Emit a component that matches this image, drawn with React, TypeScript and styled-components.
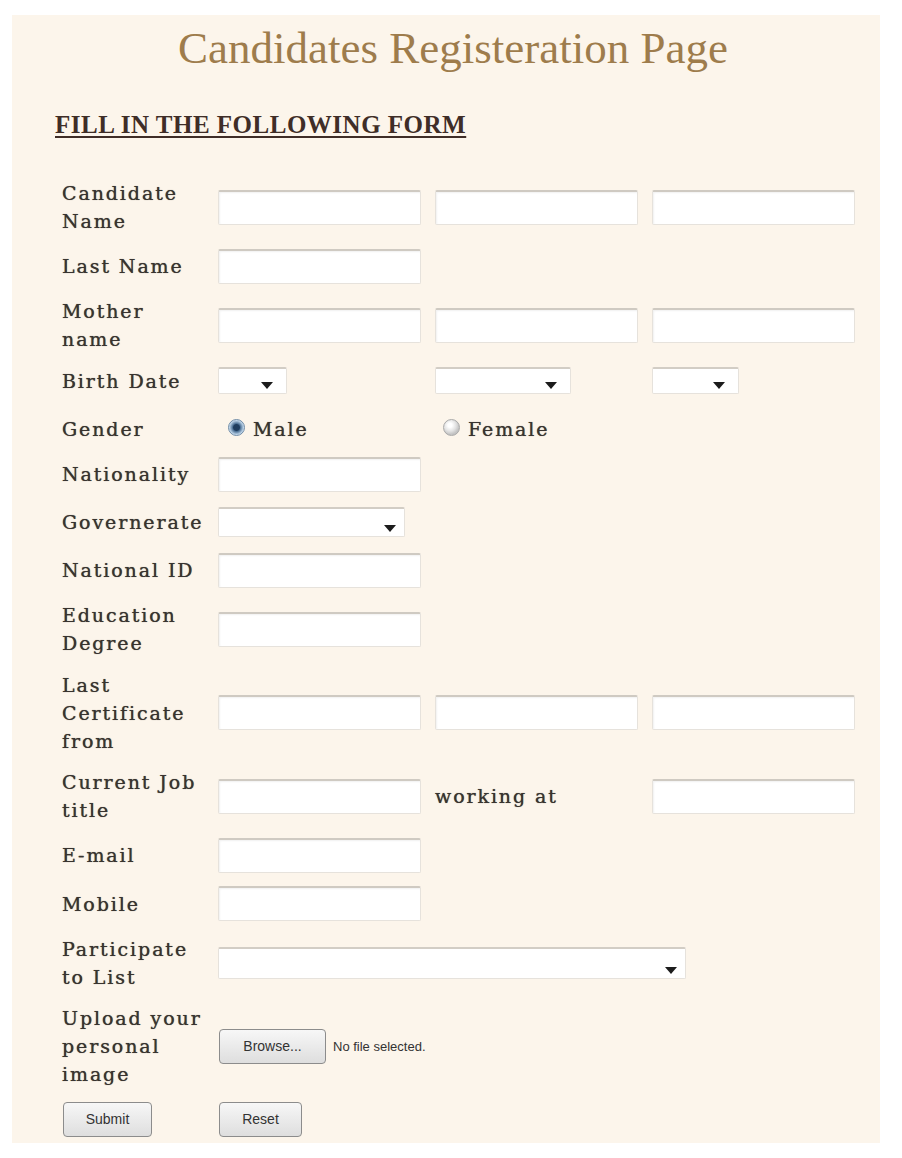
import styled, { createGlobalStyle } from "styled-components";

const GlobalStyle = createGlobalStyle`
  body {
    margin: 0;
    background: #ffffff;
  }
`;

const App = () => {
  return (
    <>
      <GlobalStyle />
      <Panel>
        <Title>Candidates Registeration Page</Title>
        <Heading>FILL IN THE FOLLOWING FORM</Heading>
        <Form>
          <Row>
            <Label lines={["Candidate", "Name"]} />
            <Fields>
              <TextInput />
              <TextInput />
              <TextInput />
            </Fields>
          </Row>
          <Row>
            <Label lines={["Last Name"]} />
            <Fields>
              <TextInput />
            </Fields>
          </Row>
          <Row>
            <Label lines={["Mother", "name"]} />
            <Fields>
              <TextInput />
              <TextInput />
              <TextInput />
            </Fields>
          </Row>
          <Row>
            <Label lines={["Birth Date"]} />
            <Fields>
              <Dropdown width={69} height={27} arrowRight={14} />
              <Dropdown width={136} height={27} arrowRight={14} />
              <Dropdown width={87} height={27} arrowRight={14} />
            </Fields>
          </Row>
          <Row $minHeight={35} $align="end">
            <Label lines={["Gender"]} />
            <Fields>
              <RadioOption $indent={10}>
                <RadioDot $checked />
                Male
              </RadioOption>
              <RadioOption $indent={8}>
                <RadioDot />
                Female
              </RadioOption>
            </Fields>
          </Row>
          <Row>
            <Label lines={["Nationality"]} />
            <Fields>
              <TextInput />
            </Fields>
          </Row>
          <Row $minHeight={34}>
            <Label lines={["Governerate"]} />
            <Fields>
              <Dropdown width={187} height={30} arrowRight={9} />
            </Fields>
          </Row>
          <Row>
            <Label lines={["National ID"]} />
            <Fields>
              <TextInput />
            </Fields>
          </Row>
          <Row>
            <Label lines={["Education", "Degree"]} />
            <Fields>
              <TextInput />
            </Fields>
          </Row>
          <Row>
            <Label lines={["Last", "Certificate", "from"]} />
            <Fields>
              <TextInput />
              <TextInput />
              <TextInput />
            </Fields>
          </Row>
          <Row>
            <Label lines={["Current Job", "title"]} />
            <Fields>
              <TextInput />
              <InlineText>working at</InlineText>
              <TextInput />
            </Fields>
          </Row>
          <Row>
            <Label lines={["E-mail"]} />
            <Fields>
              <TextInput />
            </Fields>
          </Row>
          <Row>
            <Label lines={["Mobile"]} />
            <Fields>
              <TextInput />
            </Fields>
          </Row>
          <Row>
            <Label lines={["Participate", "to List"]} />
            <Fields>
              <Wide>
                <Dropdown width={468} height={32} arrowRight={9} />
              </Wide>
            </Fields>
          </Row>
          <Row>
            <Label lines={["Upload your", "personal", "image"]} />
            <Fields>
              <Wide>
                <FileButton type="button">Browse...</FileButton>
                <FileNote>No file selected.</FileNote>
              </Wide>
            </Fields>
          </Row>
          <Row>
            <div>
              <ActionButton type="button" $width={89}>
                Submit
              </ActionButton>
            </div>
            <Fields>
              <ActionButton type="button" $width={83}>
                Reset
              </ActionButton>
            </Fields>
          </Row>
        </Form>
      </Panel>
    </>
  );
};

const Label = ({ lines }: { lines: string[] }) => (
  <LabelText>
    {lines.map((line) => (
      <span key={line}>{line}</span>
    ))}
  </LabelText>
);

interface DropdownProps {
  width: number;
  height: number;
  arrowRight: number;
}

const Dropdown = ({ width, height, arrowRight }: DropdownProps) => (
  <SelectWrap $width={width} $height={height}>
    <SelectField>
      <option value=""></option>
    </SelectField>
    <Arrow $right={arrowRight} />
  </SelectWrap>
);

const Panel = styled.div`
  width: 868px;
  margin: 15px 0 0 12px;
  padding: 8px 0 6px 0;
  background: #fcf5eb;
  box-sizing: border-box;
`;

const Title = styled.h1`
  margin: 0;
  padding-left: 14px;
  font-family: "Liberation Serif", "DejaVu Serif", serif;
  font-weight: 400;
  font-size: 45px;
  line-height: 50px;
  text-align: center;
  color: #9e7c4c;
`;

const Heading = styled.h2`
  margin: 38px 0 40px 43px;
  font-family: "Liberation Serif", serif;
  font-weight: 700;
  font-size: 25px;
  line-height: 28px;
  letter-spacing: 0.5px;
  color: #3f2d27;
  text-decoration: underline;
  text-decoration-thickness: 2px;
  text-underline-offset: 3px;
`;

const Form = styled.div`
  display: flex;
  flex-direction: column;
  gap: 13.5px;
  padding-left: 50px;
`;

const Row = styled.div<{ $minHeight?: number; $align?: string }>`
  display: grid;
  grid-template-columns: 156px auto;
  align-items: ${({ $align }) => $align || "center"};
  min-height: ${({ $minHeight }) => ($minHeight ? `${$minHeight}px` : "auto")};
`;

const labelFont = `
  font-family: "DejaVu Serif", serif;
  font-size: 19px;
  line-height: 28px;
  letter-spacing: 1.9px;
  color: #38332f;
  text-shadow: 0 0 0.7px rgba(40, 35, 30, 0.8);
  white-space: nowrap;
`;

const LabelText = styled.div`
  display: flex;
  flex-direction: column;
  ${labelFont}
`;

const Fields = styled.div`
  display: grid;
  grid-template-columns: repeat(3, 203px);
  column-gap: 14px;
  align-items: center;
`;

const TextInput = styled.input`
  width: 203px;
  height: 35px;
  box-sizing: border-box;
  border: 1px solid #e6e2dc;
  border-top: 2px solid #cfcac2;
  border-radius: 2px;
  background: #ffffff;
  box-shadow: inset 1px 1px 2px rgba(0, 0, 0, 0.06);
  padding: 0 6px;
  outline: none;
`;

const InlineText = styled.span`
  ${labelFont}
`;

const SelectWrap = styled.div<{ $width: number; $height: number }>`
  position: relative;
  width: ${({ $width }) => $width}px;
  height: ${({ $height }) => $height}px;
`;

const SelectField = styled.select`
  appearance: none;
  width: 100%;
  height: 100%;
  box-sizing: border-box;
  border: 1px solid #e6e2dc;
  border-top: 2px solid #d2cdc5;
  border-radius: 2px;
  background: #ffffff;
  outline: none;
`;

const Arrow = styled.span<{ $right: number }>`
  position: absolute;
  right: ${({ $right }) => $right}px;
  bottom: 5px;
  width: 0;
  height: 0;
  border-left: 6px solid transparent;
  border-right: 6px solid transparent;
  border-top: 7px solid #1c1c1c;
  pointer-events: none;
`;

const Wide = styled.div`
  grid-column: 1 / span 3;
  display: flex;
  align-items: center;
  gap: 7px;
`;

const RadioOption = styled.label<{ $indent: number }>`
  display: flex;
  align-items: center;
  gap: 8px;
  padding-left: ${({ $indent }) => $indent}px;
  ${labelFont}
`;

const RadioDot = styled.span<{ $checked?: boolean }>`
  position: relative;
  top: -2px;
  width: 17px;
  height: 17px;
  box-sizing: border-box;
  border-radius: 50%;
  border: 1px solid ${({ $checked }) => ($checked ? "#6d8aa6" : "#a9a9a9")};
  background: ${({ $checked }) =>
    $checked
      ? "radial-gradient(circle at 50% 50%, #1f3d5e 0 3px, #4f7296 4px, #bcd3e8 7px, #e6eff7 8px)"
      : "radial-gradient(circle at 40% 35%, #ffffff 0 2px, #e2e2e2 6px, #c4c4c4 9px)"};
`;

const FileButton = styled.button`
  width: 107px;
  height: 35px;
  margin-left: 1px;
  border: 1px solid #8c8c8c;
  border-radius: 4px;
  background: linear-gradient(#f7f7f7, #dedede);
  font-family: "Liberation Sans", Arial, sans-serif;
  font-size: 14px;
  color: #333333;
  padding: 0;
`;

const FileNote = styled.span`
  font-family: "Liberation Sans", Arial, sans-serif;
  font-size: 13px;
  color: #333333;
`;

const ActionButton = styled.button<{ $width: number }>`
  width: ${({ $width }) => $width}px;
  height: 35px;
  margin-left: 1px;
  border: 1px solid #8c8c8c;
  border-radius: 4px;
  background: linear-gradient(#f7f7f7, #dedede);
  font-family: "Liberation Sans", Arial, sans-serif;
  font-size: 14px;
  color: #333333;
  padding: 0;
`;

export default App;
